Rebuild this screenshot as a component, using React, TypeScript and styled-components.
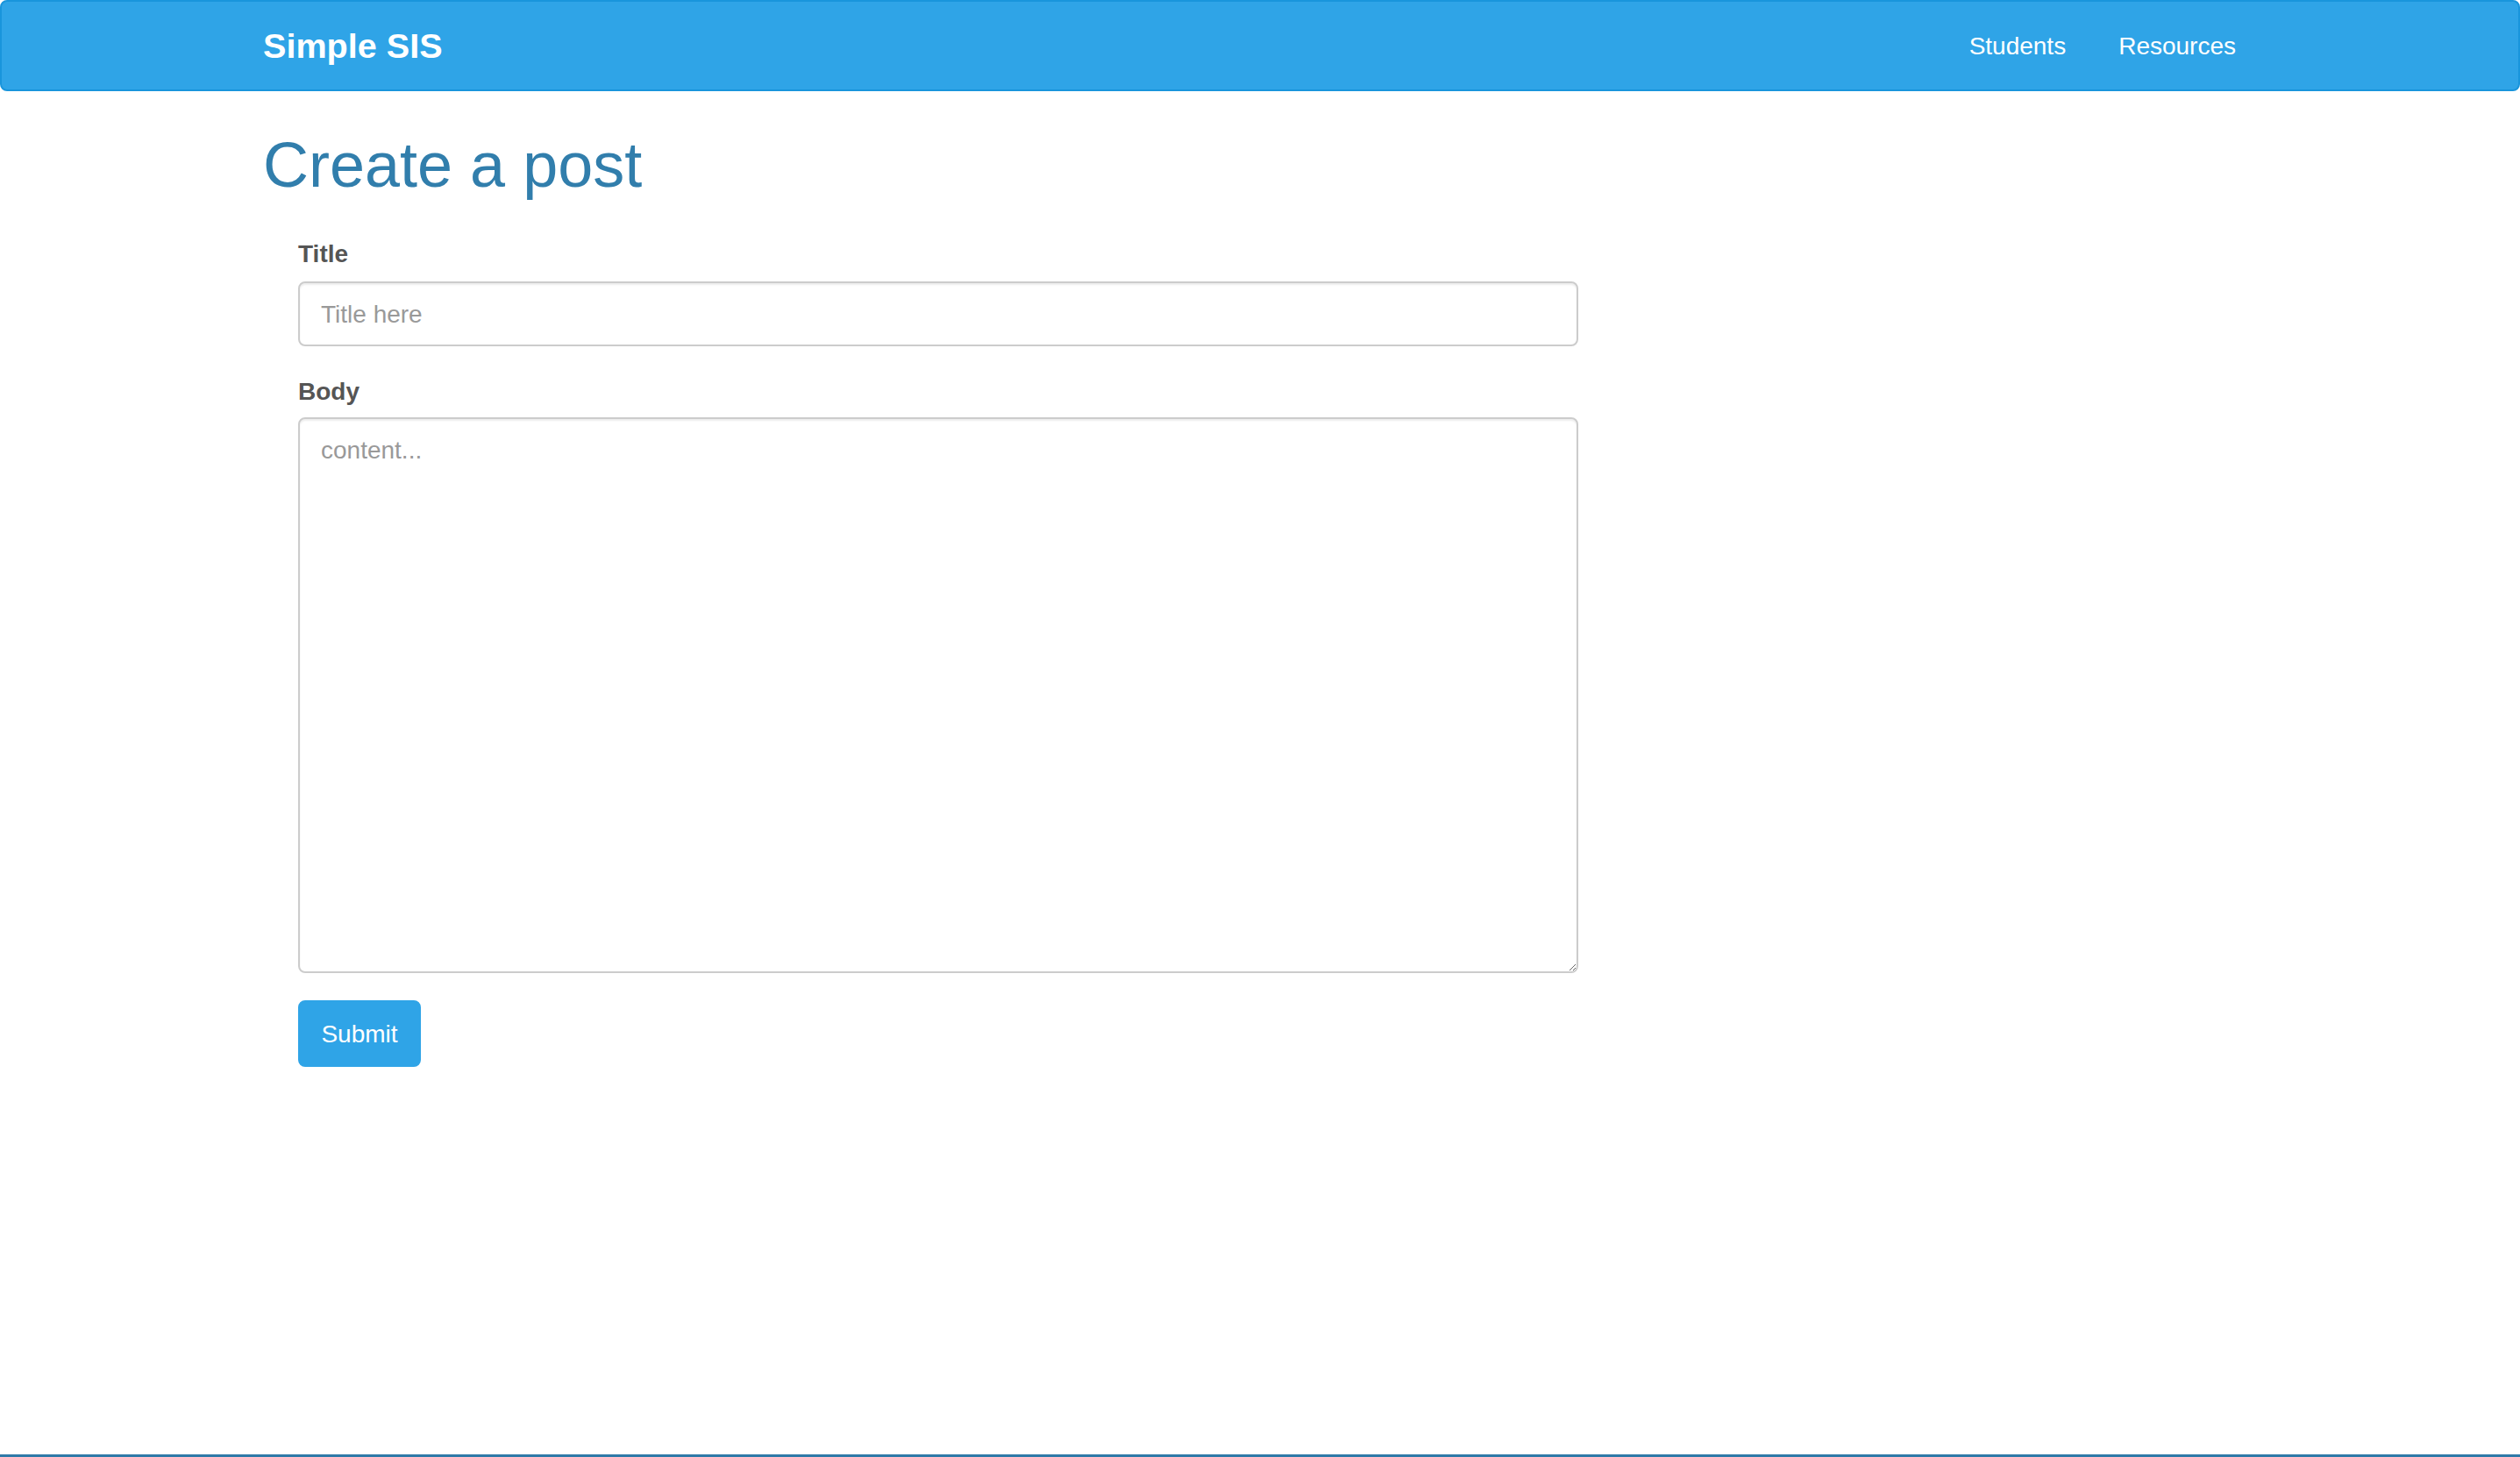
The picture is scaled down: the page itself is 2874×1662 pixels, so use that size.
import React from "react";
import styled, { createGlobalStyle } from "styled-components";

const GlobalStyle = createGlobalStyle`
  html, body {
    margin: 0;
    padding: 0;
    background: #ffffff;
  }
  body {
    font-family: "Liberation Sans", Arial, Helvetica, sans-serif;
    color: #555555;
  }
  * { box-sizing: border-box; }
`;

const Page = styled.div`
  min-height: 100vh;
  display: flex;
  flex-direction: column;
`;

const Navbar = styled.nav`
  height: 104px;
  background: #2fa4e7;
  border: 2px solid #1995dc;
  border-radius: 8px;
  display: flex;
  align-items: center;
  justify-content: space-between;
  padding: 0 292px 0 298px;
`;

const Brand = styled.a`
  color: #ffffff;
  font-size: 39.6px;
  font-weight: 700;
  text-decoration: none;
  line-height: 40px;
`;

const NavList = styled.ul`
  display: flex;
  list-style: none;
  margin: 0;
  padding: 0;
`;

const NavLink = styled.a`
  display: block;
  color: #ffffff;
  font-size: 28px;
  line-height: 40px;
  padding: 2px 30px 0;
  text-decoration: none;
`;

const Main = styled.main`
  padding: 45px 300px 0 300px;
  flex: 1;
`;

const Heading = styled.h1`
  margin: 0;
  font-size: 72px;
  line-height: 1.1;
  font-weight: 400;
  color: #317eac;
`;

const Form = styled.form`
  margin: 42px 0 0 40px;
  width: 1460px;
`;

const Group = styled.div<{ $gap: number }>`
  margin-bottom: ${(p) => p.$gap}px;
`;

const Label = styled.label<{ $below: number }>`
  display: block;
  font-size: 28px;
  line-height: 40px;
  font-weight: 700;
  color: #555555;
  margin-bottom: ${(p) => p.$below}px;
`;

const fieldBase = `
  display: block;
  width: 100%;
  font-family: "Liberation Sans", Arial, Helvetica, sans-serif;
  font-size: 28px;
  line-height: 40px;
  color: #555555;
  background: #ffffff;
  border: 2px solid #cccccc;
  border-radius: 8px;
  box-shadow: inset 0 2px 2px rgba(0, 0, 0, 0.075);
  outline: none;
  margin: 0;
  &::placeholder { color: #999999; opacity: 1; }
`;

const TextInput = styled.input`
  ${fieldBase}
  height: 74px;
  padding: 2px 24px 0;
`;

const TextArea = styled.textarea`
  ${fieldBase}
  height: 634px;
  padding: 16px 24px 12px;
  resize: both;
`;

const SubmitButton = styled.button`
  display: inline-block;
  height: 76px;
  width: 140px;
  padding: 2px 0 0;
  font-family: "Liberation Sans", Arial, Helvetica, sans-serif;
  font-size: 28px;
  line-height: 40px;
  color: #ffffff;
  background: #2fa4e7;
  border: 2px solid #2fa4e7;
  border-radius: 8px;
  cursor: pointer;
  margin-top: -1px;
`;

const Footer = styled.footer`
  height: 3px;
  background: #2f7aa8;
`;

export default function App() {
  return (
    <Page>
      <GlobalStyle />
      <Navbar>
        <Brand href="#">Simple SIS</Brand>
        <NavList>
          <li><NavLink href="#">Students</NavLink></li>
          <li><NavLink href="#">Resources</NavLink></li>
        </NavList>
      </Navbar>
      <Main>
        <Heading>Create a post</Heading>
        <Form onSubmit={(e) => e.preventDefault()}>
          <Group $gap={32}>
            <Label htmlFor="title" $below={11}>Title</Label>
            <TextInput id="title" type="text" placeholder="Title here" />
          </Group>
          <Group $gap={32}>
            <Label htmlFor="body" $below={9}>Body</Label>
            <TextArea id="body" placeholder="content..." />
          </Group>
          <SubmitButton type="submit">Submit</SubmitButton>
        </Form>
      </Main>
      <Footer />
    </Page>
  );
}
